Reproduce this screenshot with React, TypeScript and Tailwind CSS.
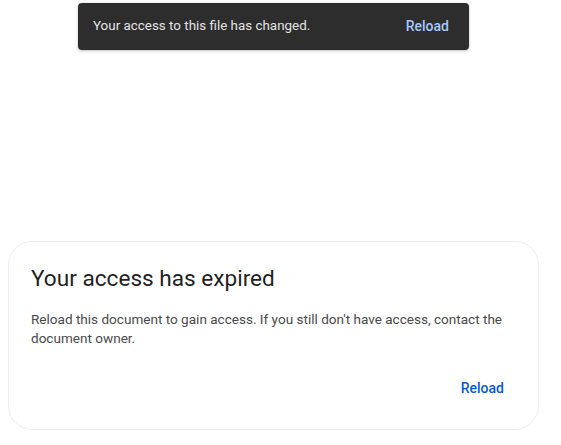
export default function App() {
  return (
    <div className="min-h-screen bg-white font-['Roboto',sans-serif]">
      <div className="ml-2 w-[531px] pt-[3px]">
        {/* Snackbar */}
        <div className="mx-auto flex h-[47px] w-[391px] items-center justify-between rounded-[4px] bg-[#2d2d2d] pl-[15px] pr-[20px] shadow-[0_1px_3px_rgba(0,0,0,0.25)]">
          <span className="text-[13.4px] text-[#e3e3e3]">Your access to this file has changed.</span>
          <button className="text-[14px] font-medium text-[#a8c7fa]">Reload</button>
        </div>

        {/* Dialog */}
        <div className="mt-[191px] h-[189px] rounded-[24px] border border-[#eeeeee] bg-white pl-[22px] pr-[33px] pt-[22px]">
          <h1 className="text-[22.6px] leading-[29px] text-[#1f1f1f]">Your access has expired</h1>
          <p className="mt-[17px] text-[13.55px] leading-[19px] text-[#4a4a4a]">
            Reload this document to gain access. If you still don't have access, contact the document owner.
          </p>
          <div className="mt-[30px] flex justify-end pr-[1px]">
            <button className="text-[14px] font-medium text-[#0b57d0]">Reload</button>
          </div>
        </div>
      </div>
    </div>
  );
}
